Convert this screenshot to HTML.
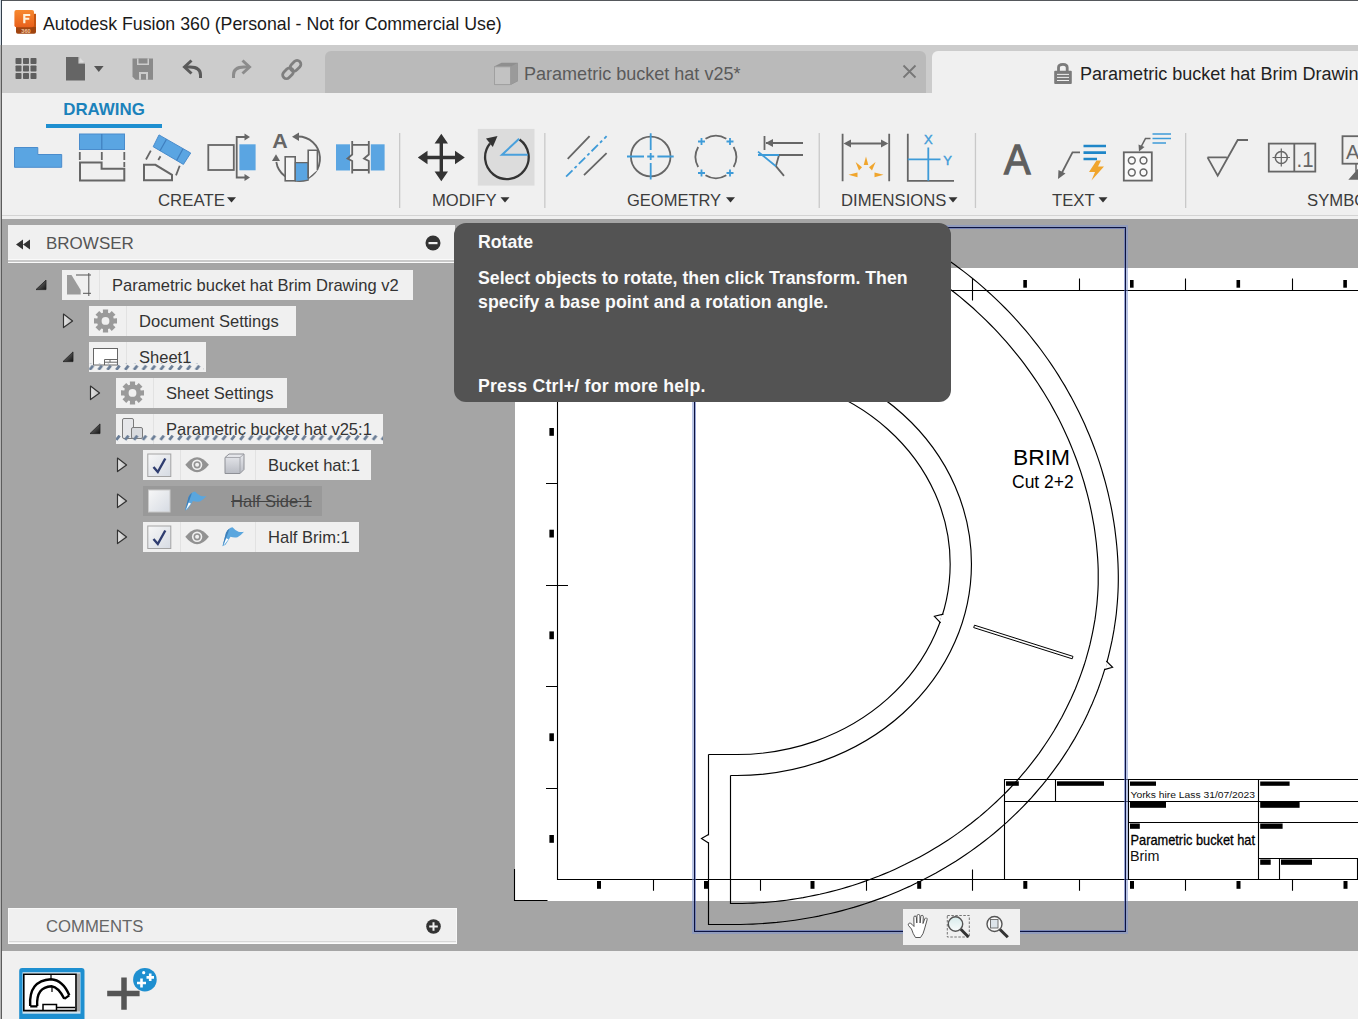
<!DOCTYPE html>
<html><head><meta charset="utf-8">
<style>
*{margin:0;padding:0;box-sizing:border-box}
html,body{width:1358px;height:1019px;overflow:hidden;background:#f0f0f0;font-family:"Liberation Sans",sans-serif}
.a{position:absolute}
.t{position:absolute;white-space:pre;line-height:1}
svg{position:absolute;overflow:visible}
.row{height:30px;background:#f0f0f0}
</style></head><body>
<!-- title bar -->
<div class="a" style="left:0;top:0;width:1358px;height:45px;background:#fff;border-top:1px solid #55585c"></div>
<div class="t" style="left:43px;top:16px;font-size:17.75px;color:#1a1a1a">Autodesk Fusion 360 (Personal - Not for Commercial Use)</div>

<!-- toolbar -->
<div class="a" style="left:0;top:45px;width:1358px;height:48px;background:#cccccc"></div>
<div class="a" style="left:325px;top:51px;width:601px;height:42px;background:#bababa;border-radius:6px 6px 0 0"></div>
<div class="t" style="left:524px;top:65px;font-size:18.05px;color:#5a5a5a">Parametric bucket hat v25*</div>
<div class="a" style="left:932px;top:51px;width:430px;height:42px;background:#f0f0f0;border-radius:6px 0 0 0"></div>
<div class="t" style="left:1080px;top:65px;font-size:18.05px;color:#222">Parametric bucket hat Brim Drawing v2</div>

<svg style="left:0;top:0" width="1" height="1">
 <defs>
  <linearGradient id="ftop" x1="0" y1="0" x2="0" y2="1"><stop offset="0" stop-color="#f7892f"/><stop offset="1" stop-color="#e8601c"/></linearGradient>
 </defs>
 <!-- app icon -->
 <path d="M16 26 H36 V32 Q36 33.8 34.2 33.8 H17.8 Q16 33.8 16 32 Z" fill="#a0440f"/>
 <path d="M33 13.8 H36 V27 H33 Z" fill="#c45412"/>
 <rect x="14.4" y="10.1" width="19.6" height="17.2" rx="2" fill="url(#ftop)"/>
 <path d="M23.2 23.2 V13.9 H30.2 V16 H25.4 V17.7 H29.3 V19.8 H25.4 V23.2 Z" fill="#fff3dc"/>
 <text x="26" y="32.6" font-size="5.6" font-weight="bold" fill="#f4c8a0" text-anchor="middle" font-family="Liberation Sans">360</text>
 <!-- grid -->
 <g fill="#5e5e5e">
  <rect x="15.5" y="58" width="6" height="6" rx="0.8"/><rect x="23" y="58" width="6" height="6" rx="0.8"/><rect x="30.5" y="58" width="6" height="6" rx="0.8"/>
  <rect x="15.5" y="65.5" width="6" height="6" rx="0.8"/><rect x="23" y="65.5" width="6" height="6" rx="0.8"/><rect x="30.5" y="65.5" width="6" height="6" rx="0.8"/>
  <rect x="15.5" y="73" width="6" height="6" rx="0.8"/><rect x="23" y="73" width="6" height="6" rx="0.8"/><rect x="30.5" y="73" width="6" height="6" rx="0.8"/>
 </g>
 <!-- file -->
 <path d="M66 57 H78.5 L85 63.5 V80.5 H66 Z" fill="#656565"/>
 <path d="M78.5 57 V63.5 H85" fill="#cccccc" stroke="#fff" stroke-width="0.1"/>
 <path d="M79.8 57.5 V62.2 H84.5 Z" fill="#dddddd"/>
 <path d="M94 66 H103.6 L98.8 72 Z" fill="#555"/>
 <!-- save -->
 <path d="M132.5 58.5 H153 V79.7 H135.5 L132.5 76.7 Z" fill="#8a8a8a"/>
 <rect x="137" y="58.5" width="12" height="6.5" fill="#cccccc"/>
 <rect x="138.5" y="58.5" width="9" height="5" fill="#8a8a8a"/>
 <rect x="139" y="72" width="9" height="7.7" fill="#cccccc"/>
 <rect x="141" y="74" width="5" height="5.7" fill="#8a8a8a"/>
 <!-- undo -->
 <path d="M200.5 78 V75 Q200.5 67 190 67 H186" fill="none" stroke="#5a5a5a" stroke-width="3"/>
 <path d="M191.5 60.5 L184.5 67 L191.5 73.5" fill="none" stroke="#5a5a5a" stroke-width="3"/>
 <!-- redo -->
 <path d="M233.5 78 V75 Q233.5 67 244 67 H248" fill="none" stroke="#8c8c8c" stroke-width="3"/>
 <path d="M242.5 60.5 L249.5 67 L242.5 73.5" fill="none" stroke="#8c8c8c" stroke-width="3"/>
 <!-- link -->
 <g fill="none" stroke="#7f7f7f" stroke-width="2.8">
  <rect x="291.7" y="59.8" width="7.6" height="12" rx="3.8" transform="rotate(45 295.5 65.8)"/>
  <rect x="284.2" y="67.3" width="7.6" height="12" rx="3.8" transform="rotate(45 288 73.3)"/>
 </g>
 <!-- inactive tab cube -->
 <path d="M494 66.5 L501.5 62.8 H517.8 V81.2 L510.5 85.1 H494 Z" fill="#8f8f8f"/>
 <path d="M494.5 66.8 H510.5 V84.6 H494.5 Z" fill="#c2c2c2" stroke="#a0a0a0" stroke-width="1"/>
 <path d="M510.5 66.8 L517.5 63 V81 L510.5 84.8 Z" fill="#9a9a9a"/>
 <!-- close X -->
 <path d="M903.5 65.5 L915.5 77.5 M915.5 65.5 L903.5 77.5" stroke="#777" stroke-width="1.8"/>
 <!-- lock -->
 <path d="M1058.5 71 V67.5 Q1058.5 64.3 1063 64.3 Q1067.2 64.3 1067.2 67.5 V71" fill="none" stroke="#7b7b7b" stroke-width="2.8"/>
 <rect x="1054.2" y="70.8" width="17.6" height="13.1" rx="1" fill="#7b7b7b"/>
 <path d="M1057 74.4 H1069 M1057 77.4 H1069 M1057 80.5 H1069" stroke="#f0f0f0" stroke-width="1"/>
</svg>
<!-- ribbon -->
<div class="a" style="left:0;top:93px;width:1358px;height:126px;background:#f0f0f0"></div>
<div class="a" style="left:0;top:215px;width:1358px;height:1px;background:#d4d4d4"></div>
<div class="t" style="left:63.2px;top:102px;font-size:16.9px;font-weight:bold;color:#1b82bb">DRAWING</div>
<div class="a" style="left:46px;top:124px;width:116px;height:4px;background:#1e8fd0"></div>
<div class="t" style="left:158px;top:193px;font-size:16.8px;color:#3c3c3c">CREATE</div>
<div class="t" style="left:432px;top:193px;font-size:16.6px;color:#3c3c3c">MODIFY</div>
<div class="t" style="left:627px;top:192.4px;font-size:16.5px;color:#3c3c3c">GEOMETRY</div>
<div class="t" style="left:841px;top:193px;font-size:16.65px;color:#3c3c3c">DIMENSIONS</div>
<div class="t" style="left:1052px;top:193px;font-size:16.7px;color:#3c3c3c">TEXT</div>
<div class="t" style="left:1307px;top:193px;font-size:16.7px;color:#3c3c3c">SYMBOLS</div>

<svg style="left:0;top:0" width="1" height="1">
 <defs>
  <marker id="ah" viewBox="0 0 10 10" refX="8" refY="5" markerWidth="4" markerHeight="4" orient="auto-start-reverse"><path d="M0 0 L10 5 L0 10 Z" fill="#666"/></marker>
 </defs>
 <!-- separators -->
 <g fill="#c9c9c9"><rect x="399" y="133" width="1.3" height="75"/><rect x="544.2" y="133" width="1.3" height="75"/><rect x="818.6" y="133" width="1.3" height="75"/><rect x="974.8" y="133" width="1.3" height="75"/><rect x="1185" y="133" width="1.3" height="75"/></g>
 <!-- dropdown triangles -->
 <g fill="#333"><path d="M227 197.3 H236 L231.5 202.6 Z"/><path d="M500.5 197.3 H509.5 L505 202.6 Z"/><path d="M726 197.3 H735 L730.5 202.6 Z"/><path d="M948.5 197.3 H957.5 L953 202.6 Z"/><path d="M1098.5 197.3 H1107.5 L1103 202.6 Z"/></g>
 <!-- 1 base view -->
 <path d="M14.5 147.5 H37.8 V154.5 H61.7 V167.3 H14.5 Z" fill="#5aa5e2" stroke="#4a8ccc" stroke-width="1"/>
 <!-- 2 projected views -->
 <rect x="79.5" y="134" width="45" height="15.5" fill="#5aa5e2" stroke="#4a8ccc" stroke-width="1"/>
 <path d="M101.8 134 V149.5" stroke="#3f7fbf" stroke-width="1.2"/>
 <path d="M79.8 152 V160 M101.8 152 V160 M124.3 152 V160 M124.3 162 V167" stroke="#666" stroke-width="1.8"/>
 <path d="M80 162.6 H101.6 V168.8 H124.3 V180.6 H80 Z" fill="none" stroke="#666" stroke-width="2"/>
 <!-- 3 auxiliary view -->
 <path d="M159 134.9 L190.7 153 L183.4 164.4 L153.2 146.7 Z" fill="#5aa5e2" stroke="#4a8ccc" stroke-width="1"/>
 <path d="M166.5 139.2 L160 150.8 M183 148.8 L176.7 160.4" stroke="#3f7fbf" stroke-width="1.2"/>
 <path d="M150.8 150.6 L146 159.5 M160.5 156.3 L158.3 160 M179.7 165.8 L176 175.4" stroke="#666" stroke-width="1.8"/>
 <path d="M144 164.8 H155.4 L172 174.8 V180.3 H144 Z" fill="none" stroke="#666" stroke-width="2"/>
 <!-- 4 projected -->
 <rect x="208.3" y="145" width="25.5" height="25" fill="none" stroke="#666" stroke-width="1.8"/>
 <rect x="239.4" y="144.3" width="16.2" height="26" fill="#5aa5e2"/>
 <path d="M246 137 H236.7 V177.5 H246" fill="none" stroke="#666" stroke-width="1.8"/>
 <path d="M244.5 133.5 L250 137 L244.5 140.5 Z M244.5 174 L250 177.5 L244.5 181 Z" fill="#666"/>
 <!-- 5 detail -->
 <text x="272.2" y="148.3" font-size="20" font-weight="bold" fill="#666" font-family="Liberation Sans" textLength="15.5" lengthAdjust="spacingAndGlyphs">A</text>
 <path d="M297.5 136.5 A22 22 0 1 1 276.3 162" fill="none" stroke="#666" stroke-width="1.8"/>
 <path d="M292 136.8 L299 132.5 L299 141 Z" fill="#666"/>
 <path d="M276 154.2 L272 161 L280 161 Z" fill="#666"/>
 <rect x="285.2" y="156.8" width="10" height="24" fill="#f6f6f6" stroke="#666" stroke-width="1.6"/>
 <path d="M295.3 162.6 H308.2 V180.2 Q301 182 295.3 181 Z" fill="#5aa5e2" stroke="#666" stroke-width="1.2"/>
 <path d="M308.2 178 V150.3 H317.4 V170" fill="#f6f6f6" stroke="#666" stroke-width="1.6"/>
 <!-- 6 break view -->
 <rect x="336" y="144.3" width="14" height="26.2" fill="#5aa5e2"/>
 <rect x="370.8" y="144.3" width="13.8" height="26.2" fill="#5aa5e2"/>
 <path d="M352 144.8 H369 M352 170 H369" stroke="#666" stroke-width="1.8"/>
 <path d="M352.2 141 V154.5 L347.5 158.5 L352.2 161 V173.5 M368.8 141 V154.5 L364 158.5 L368.8 161 V173.5" fill="none" stroke="#666" stroke-width="1.8"/>
 <!-- 7 move -->
 <path d="M441.3 140 V175 M423.5 157.5 H459" stroke="#333" stroke-width="3.4"/>
 <path d="M441.3 133.8 L448 143.5 H434.6 Z M441.3 181.3 L448 171.5 H434.6 Z M417.8 157.5 L427.5 150.8 V164.2 Z M464.8 157.5 L455 150.8 V164.2 Z" fill="#333"/>
 <!-- 8 rotate -->
 <rect x="477.8" y="128.9" width="56.7" height="56.7" fill="#dcdcdc"/>
 <path d="M519.5 139.5 A21.8 21.8 0 1 1 490 143.5" fill="none" stroke="#333" stroke-width="2.3"/>
 <path d="M497.5 136 L486 138.5 L492.8 147 Z" fill="#333"/>
 <path d="M527.8 154.8 H502 L519.1 138.8" fill="none" stroke="#49a0dc" stroke-width="2"/>
 <!-- 9 centerline -->
 <path d="M567.7 158.9 L589.6 136.2 M584 175.1 L606.6 153.2" stroke="#666" stroke-width="1.8"/>
 <path d="M566.1 176.7 L606.6 136.2" stroke="#3e9bd8" stroke-width="1.8" stroke-dasharray="9 3 3 3"/>
 <!-- 10 center mark -->
 <circle cx="650.7" cy="156.5" r="19.8" fill="none" stroke="#666" stroke-width="1.8"/>
 <path d="M627 156.5 H644 M647.2 156.5 H654.2 M657.4 156.5 H673.7 M650.7 133.3 V150 M650.7 153 V160 M650.7 163 V179.6" stroke="#3e9bd8" stroke-width="1.8"/>
 <!-- 11 circle with pluses -->
 <path d="M705.5 138.8 A20.3 20.3 0 0 1 726.3 138.8 M733.6 147 A20.3 20.3 0 0 1 733.6 167 M726.3 175.3 A20.3 20.3 0 0 1 705.5 175.3 M698.2 167 A20.3 20.3 0 0 1 698.2 147" fill="none" stroke="#666" stroke-width="1.8"/>
 <path d="M698 141.5 H705 M701.5 138 V145 M726.5 141.5 H733.5 M730 138 V145 M698 173 H705 M701.5 169.5 V176.5 M726.5 173 H733.5 M730 169.5 V176.5" stroke="#3e9bd8" stroke-width="1.8"/>
 <!-- 12 leader datum -->
 <path d="M764.5 136 V150 M766 143 H803 M779 155 H803 M779 155 L775.9 166.2 L784 175.9" fill="none" stroke="#666" stroke-width="1.8"/>
 <path d="M765.5 143 L773 139 V147 Z" fill="#666"/>
 <path d="M758 151.6 L775.9 166.2 M758 155 H779" stroke="#3e9bd8" stroke-width="1.8"/>
 <!-- 13 linear dim -->
 <path d="M842.6 133.8 V181.3 M889.2 133.8 V181.3 M847 143.5 H885" stroke="#666" stroke-width="1.8"/>
 <path d="M843.5 143.5 L851 139.5 V147.5 Z M888.3 143.5 L881 139.5 V147.5 Z" fill="#666"/>
 <g fill="#f0a52c">
  <path d="M866 156.5 L868.3 165 L863.7 165 Z"/>
  <path d="M875.6 162 L872 170.5 L869 167.3 Z"/>
  <path d="M855.6 162 L862 167.3 L859 170.5 Z"/>
  <path d="M848.5 174.8 L857.5 172.5 L857.5 177.2 Z"/>
  <path d="M883.5 174.8 L874.5 172.5 L874.5 177.2 Z"/>
 </g>
 <!-- 14 ordinate -->
 <path d="M907.8 133.8 V180.8 H954" fill="none" stroke="#666" stroke-width="1.8"/>
 <path d="M928.3 147.6 V180.8 M907.8 159.4 H940.5" stroke="#3e9bd8" stroke-width="1.8"/>
 <text x="928.3" y="143.5" font-size="13" fill="#3e9bd8" stroke="#3e9bd8" stroke-width="0.4" text-anchor="middle" font-family="Liberation Sans">X</text>
 <text x="947.5" y="164.8" font-size="13" fill="#3e9bd8" stroke="#3e9bd8" stroke-width="0.4" text-anchor="middle" font-family="Liberation Sans">Y</text>
 <!-- 15 A -->
 <text x="1004" y="174.3" font-size="43" fill="#5f5f5f" stroke="#5f5f5f" stroke-width="1.3" font-family="Liberation Sans" textLength="26.5" lengthAdjust="spacingAndGlyphs">A</text>
 <!-- 16 leader note -->
 <path d="M1080 152.4 H1072.5 L1060.5 175.5" fill="none" stroke="#666" stroke-width="1.8"/>
 <path d="M1058 179 L1058.5 170 L1065.5 173.5 Z" fill="#666"/>
 <path d="M1083.5 146 H1106 M1083.5 152.6 H1106 M1083.5 159 H1097" stroke="#1f86c8" stroke-width="2.6"/>
 <path d="M1096.5 160.5 L1089 172 H1095 L1091.5 180.5 L1104 166.5 H1098 L1101 160.5 Z" fill="#f0a52c"/>
 <!-- 17 balloon -->
 <rect x="1123.8" y="152.3" width="28" height="28.3" fill="#fafafa" stroke="#666" stroke-width="1.8"/>
 <g fill="none" stroke="#666" stroke-width="1.5"><circle cx="1131.8" cy="160.5" r="3.4"/><circle cx="1143.5" cy="160.5" r="3.4"/><circle cx="1131.8" cy="172.5" r="3.4"/><circle cx="1143.5" cy="172.5" r="3.4"/></g>
 <path d="M1150.5 138.5 H1145.5 L1141 147" fill="none" stroke="#666" stroke-width="1.6"/>
 <path d="M1139 151.5 L1138.5 144.5 L1144.5 147 Z" fill="#666"/>
 <path d="M1152.5 134 H1171 M1152.5 138.6 H1171 M1152.5 143 H1166" stroke="#3e9bd8" stroke-width="1.5"/>
 <!-- 18 surface texture -->
 <path d="M1207.5 157.4 H1226.8 M1207.5 157.4 L1217.7 175.7 L1237.7 140 H1248" fill="none" stroke="#666" stroke-width="1.8" stroke-linejoin="miter"/>
 <!-- 19 FCF -->
 <rect x="1268.8" y="143.6" width="46.5" height="28" fill="none" stroke="#666" stroke-width="1.8"/>
 <path d="M1294.3 143.6 V171.6" stroke="#666" stroke-width="1.8"/>
 <circle cx="1281.3" cy="157.5" r="6" fill="none" stroke="#666" stroke-width="1.5"/>
 <path d="M1272.5 157.5 H1290 M1281.3 148.5 V166.5" stroke="#666" stroke-width="1.2"/>
 <text x="1296.5" y="166.8" font-size="22" fill="#666" font-family="Liberation Sans" textLength="17" lengthAdjust="spacingAndGlyphs">.1</text>
 <!-- 20 datum -->
 <rect x="1342.5" y="136.2" width="25" height="27.5" fill="none" stroke="#666" stroke-width="1.8"/>
 <text x="1346" y="159" font-size="20" fill="#666" font-family="Liberation Sans">A</text>
 <path d="M1356 164 V175 M1350 179 L1358 170 L1366 179 Z" stroke="#666" stroke-width="1.5" fill="#666"/>
</svg>
<!-- canvas -->
<div class="a" style="left:0;top:219px;width:1358px;height:732px;background:#a5a5a5"></div>
<div class="a" style="left:515px;top:268px;width:843px;height:633px;background:#fff"></div>
<svg style="left:0;top:0" width="1" height="1">
 <g stroke="#000" stroke-width="1.1" fill="none">
  <!-- border -->
  <path d="M557.5 290 V880 M557 290.5 H1358 M557 879.5 H1358"/>
  <!-- left ticks -->
  <path d="M546 381.5 H557 M546 483.5 H557 M546 585.5 H568 M546 686.5 H557 M546 788.5 H557"/>
  <!-- top ticks -->
  <path d="M653.5 278.5 V290 M760.5 278.5 V290 M866.5 278.5 V290 M972.5 278.5 V300.5 M1079.5 278.5 V290 M1185.5 278.5 V290 M1292.5 278.5 V290"/>
  <!-- bottom ticks -->
  <path d="M653.5 880 V890.7 M760.5 880 V890.7 M866.5 880 V890.7 M972.5 869.5 V890.7 M1079.5 880 V890.7 M1185.5 880 V890.7 M1292.5 880 V890.7"/>
  <!-- crop mark -->
  <path d="M514.5 869 V900.5 H547.5"/>
 </g>
 <g fill="#000">
  <rect x="549.4" y="428" width="4.5" height="7.8"/><rect x="549.4" y="529.7" width="4.5" height="7.8"/><rect x="549.4" y="631.4" width="4.5" height="7.8"/><rect x="549.4" y="733.3" width="4.5" height="7.8"/><rect x="549.4" y="835" width="4.5" height="7.8"/>
  <rect x="597" y="881" width="4" height="7.8"/><rect x="704" y="881" width="4" height="7.8"/><rect x="810.5" y="881" width="4" height="7.8"/><rect x="917.2" y="881" width="4" height="7.8"/><rect x="1023.3" y="881" width="4" height="7.8"/><rect x="1130" y="881" width="4" height="7.8"/><rect x="1236.5" y="881" width="4" height="7.8"/><rect x="1343.5" y="881" width="4" height="7.8"/>
  <rect x="1023.3" y="280" width="3.6" height="7.7"/><rect x="1130" y="280" width="3.6" height="7.7"/><rect x="1236.5" y="280" width="3.6" height="7.7"/><rect x="1343.3" y="280" width="3.6" height="7.7"/>
 </g>
 <!-- brim shape -->
 <clipPath id="cv"><rect x="0" y="224" width="1358" height="727"/></clipPath>
 <g stroke="#000" stroke-width="1.15" fill="none" clip-path="url(#cv)">
  <path d="M737 373.4 A213 190.4 0 0 1 737 754.5 H708.5"/>
  <path d="M737 352.3 A234 211.2 0 0 1 737 775.5 H730.5"/>
  <path d="M862.3 215.3 L868.0 217.5 L873.6 219.7 L879.3 222.1 L884.8 224.5 L890.4 227.0 L895.9 229.6 L901.4 232.3 L906.8 235.1 L912.2 238.0 L917.5 241.0 L922.8 244.0 L928.1 247.2 L933.3 250.4 L938.5 253.7 L943.6 257.0 L948.7 260.5 L953.7 264.0 L958.7 267.7 L963.6 271.4 L968.4 275.1 L973.2 279.0 L978.0 282.9 L982.6 286.9 L987.2 291.0 L991.8 295.1 L996.3 299.3 L1000.7 303.6 L1005.1 308.0 L1009.4 312.4 L1013.6 316.9 L1017.7 321.4 L1021.8 326.1 L1025.8 330.7 L1029.8 335.5 L1033.6 340.3 L1037.4 345.1 L1041.1 350.0 L1044.7 355.0 L1048.3 360.0 L1051.8 365.1 L1055.2 370.2 L1058.5 375.4 L1061.7 380.7 L1064.9 385.9 L1067.9 391.3 L1070.9 396.6 L1073.8 402.0 L1076.6 407.5 L1079.4 413.0 L1082.0 418.5 L1084.6 424.1 L1087.0 429.7 L1089.4 435.3 L1091.7 441.0 L1093.9 446.7 L1096.0 452.4 L1098.0 458.1 L1099.9 463.9 L1101.7 469.7 L1103.4 475.5 L1105.1 481.4 L1106.6 487.2 L1108.1 493.1 L1109.4 499.0 L1110.7 504.9 L1111.9 510.8 L1112.9 516.7 L1113.9 522.6 L1114.8 528.6 L1115.5 534.5 L1116.2 540.4 L1116.8 546.3 L1117.3 552.2 L1117.7 558.1 L1118.0 563.9 L1118.2 569.7 L1118.3 575.4 L1118.3 580.9 L1118.2 586.4 L1118.0 591.8 L1117.7 597.3 L1117.3 602.8 L1116.8 608.2 L1116.3 613.7 L1115.6 619.1 L1114.8 624.5 L1114.0 629.9 L1113.0 635.3 L1112.0 640.7 L1110.8 646.1 L1109.6 651.4 L1108.3 656.8 L1106.9 662.1 L1105.3 667.4 L1103.7 672.6 L1102.0 677.9 L1100.2 683.1 L1098.4 688.3 L1096.4 693.5 L1094.3 698.6 L1092.2 703.7 L1089.9 708.8 L1087.6 713.9 L1085.2 718.9 L1082.7 723.9 L1080.1 728.8 L1077.4 733.7 L1074.7 738.6 L1071.8 743.4 L1068.9 748.2 L1065.9 752.9 L1062.8 757.6 L1059.6 762.3 L1056.3 766.9 L1053.0 771.4 L1049.6 775.9 L1046.1 780.4 L1042.5 784.8 L1038.8 789.2 L1035.1 793.5 L1031.3 797.8 L1027.4 802.0 L1023.5 806.1 L1019.5 810.2 L1015.4 814.2 L1011.2 818.2 L1007.0 822.1 L1002.7 825.9 L998.3 829.7 L993.9 833.5 L989.4 837.1 L984.8 840.7 L980.2 844.3 L975.5 847.7 L970.8 851.1 L965.9 854.5 L961.1 857.7 L956.2 860.9 L951.2 864.0 L946.2 867.1 L941.1 870.1 L936.0 873.0 L930.8 875.8 L925.5 878.6 L920.3 881.2 L914.9 883.8 L909.6 886.4 L904.2 888.8 L898.7 891.2 L893.2 893.5 L887.7 895.7 L882.1 897.9 L876.5 899.9 L870.8 901.9 L865.2 903.8 L859.5 905.6 L853.7 907.4 L847.9 909.0 L842.1 910.6 L836.3 912.1 L830.5 913.5 L824.6 914.8 L818.7 916.1 L812.8 917.2 L806.8 918.3 L800.9 919.3 L794.9 920.2 L788.9 921.0 L782.9 921.7 L776.9 922.4 L770.8 922.9 L764.8 923.4 L758.8 923.8 L752.7 924.1 L746.7 924.3 L740.6 924.5 L734.5 924.5 H708.5 V754.5"/>
  <path d="M762.8 215.1 L768.2 215.6 L773.6 216.2 L779.1 216.9 L784.5 217.7 L790.0 218.6 L795.4 219.5 L800.9 220.6 L806.4 221.8 L811.8 223.0 L817.3 224.4 L822.7 225.8 L828.2 227.4 L833.6 229.0 L839.0 230.7 L844.4 232.5 L849.8 234.4 L855.1 236.3 L860.5 238.4 L865.8 240.5 L871.1 242.8 L876.3 245.1 L881.6 247.5 L886.8 250.0 L891.9 252.6 L897.1 255.2 L902.2 258.0 L907.2 260.8 L912.2 263.7 L917.2 266.7 L922.1 269.7 L927.0 272.9 L931.9 276.1 L936.7 279.4 L941.5 282.7 L946.2 286.2 L950.8 289.7 L955.4 293.3 L960.0 296.9 L964.5 300.7 L968.9 304.5 L973.3 308.3 L977.6 312.3 L981.9 316.3 L986.1 320.4 L990.2 324.5 L994.3 328.7 L998.3 332.9 L1002.3 337.3 L1006.2 341.6 L1010.0 346.1 L1013.7 350.6 L1017.4 355.1 L1021.0 359.7 L1024.6 364.4 L1028.0 369.1 L1031.4 373.8 L1034.7 378.6 L1038.0 383.5 L1041.1 388.4 L1044.2 393.3 L1047.2 398.3 L1050.2 403.3 L1053.0 408.4 L1055.8 413.5 L1058.5 418.6 L1061.1 423.8 L1063.6 429.0 L1066.0 434.2 L1068.4 439.5 L1070.6 444.8 L1072.8 450.1 L1074.9 455.5 L1076.9 460.8 L1078.8 466.2 L1080.7 471.6 L1082.4 477.1 L1084.1 482.5 L1085.6 488.0 L1087.1 493.4 L1088.5 498.9 L1089.8 504.4 L1091.0 509.9 L1092.1 515.4 L1093.1 520.9 L1094.1 526.4 L1094.9 531.8 L1095.6 537.3 L1096.3 542.7 L1096.8 548.2 L1097.3 553.6 L1097.7 558.9 L1098.0 564.2 L1098.2 569.5 L1098.2 574.6 L1098.2 579.4 L1098.2 584.3 L1098.0 589.3 L1097.7 594.2 L1097.3 599.3 L1096.9 604.3 L1096.3 609.3 L1095.7 614.3 L1095.0 619.4 L1094.1 624.4 L1093.2 629.4 L1092.2 634.4 L1091.1 639.4 L1090.0 644.4 L1088.7 649.4 L1087.3 654.4 L1085.9 659.4 L1084.4 664.3 L1082.7 669.2 L1081.0 674.1 L1079.2 679.0 L1077.3 683.9 L1075.4 688.7 L1073.3 693.5 L1071.2 698.3 L1068.9 703.1 L1066.6 707.8 L1064.2 712.5 L1061.8 717.2 L1059.2 721.8 L1056.6 726.4 L1053.9 731.0 L1051.1 735.5 L1048.2 740.0 L1045.2 744.5 L1042.2 748.9 L1039.1 753.3 L1035.9 757.6 L1032.6 761.9 L1029.3 766.1 L1025.9 770.3 L1022.4 774.4 L1018.9 778.5 L1015.2 782.6 L1011.5 786.6 L1007.8 790.5 L1004.0 794.4 L1000.1 798.2 L996.1 802.0 L992.1 805.7 L988.0 809.4 L983.8 813.0 L979.6 816.6 L975.3 820.0 L971.0 823.5 L966.6 826.8 L962.2 830.1 L957.7 833.4 L953.1 836.6 L948.5 839.7 L943.8 842.7 L939.1 845.7 L934.4 848.6 L929.5 851.5 L924.7 854.2 L919.8 856.9 L914.8 859.6 L909.8 862.1 L904.8 864.6 L899.7 867.0 L894.6 869.4 L889.5 871.7 L884.3 873.9 L879.1 876.0 L873.8 878.0 L868.5 880.0 L863.2 881.9 L857.9 883.7 L852.5 885.5 L847.1 887.1 L841.7 888.7 L836.2 890.2 L830.8 891.6 L825.3 893.0 L819.8 894.3 L814.3 895.4 L808.7 896.5 L803.2 897.6 L797.6 898.5 L792.1 899.4 L786.5 900.2 L781.0 900.9 L775.4 901.5 L769.8 902.0 L764.3 902.5 L758.7 902.8 L753.2 903.1 L747.7 903.3 L742.2 903.5 L736.8 903.5 H730.5 V775.5"/>
  <!-- notches -->
  <path d="M708.5 835.2 V842.3 M943 614.9 L940.8 622 M1105.9 662 L1104.8 668.8" stroke="#fff" stroke-width="2.6"/>
  <path d="M708.5 834.5 L701.5 838.5 L708.5 843"/>
  <path d="M943.4 614.1 L934.4 616.3 L940.6 622.8"/>
  <path d="M1106.4 661.1 L1112.6 667.3 L1104.3 669.6"/>
  <!-- grainline -->
  <path d="M974.5 625.2 L1073 656.4 L1072.2 658.8 L973.7 627.6 Z" stroke-width="1"/>
 </g>
 <!-- title block -->
 <g stroke="#000" stroke-width="1.1" fill="none">
  <path d="M1004.5 879.5 V779.5 H1358 M1004.5 801.5 H1128.5 M1055.5 779.5 V801.5 M1128.5 779.5 V879.5 M1128.5 801.5 H1358 M1128.5 822.5 H1358 M1258.5 779.5 V879.5 M1258.5 858.5 H1358 M1279.5 858.5 V879.5 M1357.5 858.5 V879.5"/>
 </g>
 <g fill="#000">
  <rect x="1006" y="781.3" width="12.8" height="4.5"/><rect x="1057" y="781.3" width="47" height="4.5"/>
  <rect x="1130" y="781.5" width="26" height="4.3"/><rect x="1260.2" y="781.5" width="29.4" height="4.3"/>
  <rect x="1130" y="802" width="36" height="5.8"/><rect x="1260.2" y="802" width="39.4" height="5.8"/>
  <rect x="1130" y="823.5" width="9.8" height="5.3"/><rect x="1260.2" y="823.5" width="22.4" height="5.3"/>
  <rect x="1260.2" y="859.5" width="10.5" height="5.3"/><rect x="1281" y="859.5" width="31" height="5.3"/>
 </g>
 <text x="1130.5" y="797.8" font-size="9.6" fill="#111" font-family="Liberation Sans" textLength="124.5" lengthAdjust="spacingAndGlyphs">Yorks hire Lass  31/07/2023</text>
 <text x="1130.5" y="845.4" font-size="14.2" fill="#000" stroke="#000" stroke-width="0.3" font-family="Liberation Sans" textLength="124.5" lengthAdjust="spacingAndGlyphs">Parametric bucket hat</text>
 <text x="1130" y="860.5" font-size="14.4" fill="#111" font-family="Liberation Sans" textLength="29.5" lengthAdjust="spacingAndGlyphs">Brim</text>
 <!-- text -->
 <text x="1013" y="464.8" font-size="22.8" fill="#000" font-family="Liberation Sans">BRIM</text>
 <text x="1012" y="488.3" font-size="17.5" fill="#000" font-family="Liberation Sans">Cut 2+2</text>
</svg>

<!-- selection rect -->
<div class="a" style="left:692px;top:225px;width:436px;height:709px;border:2px solid rgba(130,150,210,0.55)"></div>
<div class="a" style="left:694px;top:227px;width:432px;height:705px;border:1px solid #0c1340;"></div>
<div class="a" style="left:695px;top:228px;width:430px;height:703px;border:1px solid rgba(90,110,190,0.6)"></div>
<!-- nav bar -->
<div class="a" style="left:903px;top:909px;width:117px;height:36px;background:#f0f0f0"></div>
<svg style="left:0;top:0" width="1" height="1">
 <defs><linearGradient id="lens" x1="0" y1="0" x2="0" y2="1"><stop offset="0" stop-color="#d8ecec"/><stop offset="1" stop-color="#f8fbfb"/></linearGradient></defs>
 <!-- hand -->
 <path d="M911.5 929 L908.5 925.5 Q907.5 924 909.2 923.2 Q910.5 922.8 912 924.3 L914 926.5 L913.8 917.5 Q913.8 916 915 916 Q916.3 916 916.4 917.5 L916.8 923 L917 915.8 Q917.2 914.5 918.5 914.5 Q919.8 914.5 919.9 915.8 L920.1 923 L920.8 916.5 Q921 915.2 922.2 915.3 Q923.4 915.5 923.3 916.8 L923 923.5 L924.8 918.8 Q925.4 917.6 926.5 918 Q927.5 918.5 927.1 919.8 L924.5 929 Q923.5 934 920.5 937.5 H915.5 Q913 934 911.5 929 Z" fill="#fff" stroke="#444" stroke-width="0.9"/>
 <!-- zoom window -->
 <rect x="947.3" y="915.5" width="22" height="21.5" fill="none" stroke="#666" stroke-width="0.9" stroke-dasharray="2.5 1.5"/>
 <circle cx="955.5" cy="924" r="7.2" fill="url(#lens)" stroke="#555" stroke-width="1.4"/>
 <path d="M960.8 929.3 L968.5 937" stroke="#333" stroke-width="3"/>
 <!-- zoom fit -->
 <circle cx="994.5" cy="924" r="7.5" fill="#fafafa" stroke="#555" stroke-width="1.4"/>
 <rect x="990.5" y="919.5" width="7.5" height="8.5" fill="#dde4ea" stroke="#666" stroke-width="0.9"/>
 <path d="M1000 929.5 L1007.8 937.3" stroke="#333" stroke-width="3"/>
</svg>
<!-- browser -->
<div class="a" style="left:8px;top:225px;width:447px;height:38px;background:#f0f0f0"></div>
<div class="t" style="left:46px;top:235px;font-size:17px;color:#555">BROWSER</div>
<div class="a" style="left:8px;top:259px;width:447px;height:1px;background:#fafafa"></div>
<div class="a" style="left:8px;top:260px;width:447px;height:2px;background:#c8c8c8"></div>
<div class="a" style="left:8px;top:262px;width:447px;height:1px;background:#fafafa"></div>
<svg style="left:0;top:0" width="1" height="1">
 <path d="M16 244.5 L23 239.5 L23 249.5 Z M23 244.5 L30 239.5 L30 249.5 Z" fill="#333"/>
 <circle cx="433" cy="243" r="7.5" fill="#333"/>
 <rect x="428.5" y="242" width="9" height="2.2" fill="#f0f0f0"/>
</svg>
<!-- tree rows -->
<div class="a row" style="left:62px;top:270px;width:351px"></div>
<div class="a row" style="left:89px;top:306px;width:207px"></div>
<div class="a row" style="left:89px;top:342px;width:117px"></div>
<div class="a row" style="left:116px;top:378px;width:171px"></div>
<div class="a row" style="left:116px;top:414px;width:267px"></div>
<div class="a row" style="left:143px;top:450px;width:228px"></div>
<div class="a row" style="left:143px;top:486px;width:179px;background:#999"></div>
<div class="a row" style="left:143px;top:522px;width:216px"></div>
<svg style="left:0;top:0" width="1" height="1">
 <defs>
  <linearGradient id="tri" x1="0" y1="0" x2="1" y2="1"><stop offset="0" stop-color="#888"/><stop offset="1" stop-color="#111"/></linearGradient>
  <linearGradient id="otri" x1="0" y1="0" x2="1" y2="0"><stop offset="0" stop-color="#e6e6e6"/><stop offset="1" stop-color="#bdbdbd"/></linearGradient>
  <linearGradient id="cb" x1="0" y1="0" x2="1" y2="1"><stop offset="0" stop-color="#f7f7f7"/><stop offset="1" stop-color="#d6dbe3"/></linearGradient>
  <linearGradient id="cube" x1="0" y1="0" x2="0" y2="1"><stop offset="0" stop-color="#e9eaee"/><stop offset="1" stop-color="#b9bcc4"/></linearGradient>
  <pattern id="dots" x="0" y="0" width="8.85" height="7" patternUnits="userSpaceOnUse"><path d="M1.2 5.8 L4.6 1.6" stroke="#6a7d96" stroke-width="2.8"/></pattern>
  <g id="gear"><path d="M7.95 -3.29 L8.22 -2.51 L11.50 -2.65 L11.50 2.65 L8.22 2.51 L7.95 3.29 L7.59 4.04 L10.01 6.25 L6.25 10.01 L4.04 7.59 L3.29 7.95 L2.51 8.22 L2.65 11.50 L-2.65 11.50 L-2.51 8.22 L-3.29 7.95 L-4.04 7.59 L-6.25 10.01 L-10.01 6.25 L-7.59 4.04 L-7.95 3.29 L-8.22 2.51 L-11.50 2.65 L-11.50 -2.65 L-8.22 -2.51 L-7.95 -3.29 L-7.59 -4.04 L-10.01 -6.25 L-6.25 -10.01 L-4.04 -7.59 L-3.29 -7.95 L-2.51 -8.22 L-2.65 -11.50 L2.65 -11.50 L2.51 -8.22 L3.29 -7.95 L4.04 -7.59 L6.25 -10.01 L10.01 -6.25 L7.59 -4.04 Z M-3.9 0 A3.9 3.9 0 1 0 3.9 0 A3.9 3.9 0 1 0 -3.9 0 Z" fill="#9a9a9a" fill-rule="evenodd"/></g>
  <g id="eye"><path d="M-11.8 0 Q0 -15 11.8 0 Q0 15 -11.8 0 Z" fill="#929292"/><circle r="5.2" fill="#f0f0f0"/><circle r="3.6" fill="#929292"/><circle r="2" fill="#f0f0f0"/></g>
  <g id="chk"><rect x="0.5" y="0.5" width="23" height="22.5" fill="url(#cb)" stroke="#a3a3a3"/><path d="M6.2 13.5 L10.5 18.5 L18 5" fill="none" stroke="#2f3d70" stroke-width="2.4"/></g>
  <g id="flag"><path d="M0 19.5 L3.5 6 Q6 1 10 0.5 Q13 4 16 5 Q19 5.5 21.5 5 Q18 9 15 10.5 Q11 11 8 10 L3 18 Z" fill="#5aa6de"/><path d="M1 19 L3.6 11.5 L6 12.5 Z" fill="#fff"/><path d="M0 19.5 L3.5 6 Q5 3 7 1.8 L4.5 9 Z" fill="#3f7fb8"/></g>
 </defs>
 <!-- expanders -->
 <path d="M36 289.6 L46 280.1 L46 289.6 Z" fill="url(#tri)" stroke="#222" stroke-width="0.8"/>
 <path d="M63 361.6 L73 351.9 L73 361.6 Z" fill="url(#tri)" stroke="#222" stroke-width="0.8"/>
 <path d="M90 433.6 L100 423.9 L100 433.6 Z" fill="url(#tri)" stroke="#222" stroke-width="0.8"/>
 <path d="M63.5 314.1 L72.6 320.9 L63.5 327.6 Z" fill="url(#otri)" stroke="#333" stroke-width="1.2" stroke-linejoin="round"/>
 <path d="M90.5 386.1 L99.6 392.9 L90.5 399.6 Z" fill="url(#otri)" stroke="#333" stroke-width="1.2" stroke-linejoin="round"/>
 <path d="M117.5 458.1 L126.6 464.9 L117.5 471.6 Z" fill="url(#otri)" stroke="#333" stroke-width="1.2" stroke-linejoin="round"/>
 <path d="M117.5 494.1 L126.6 500.9 L117.5 507.6 Z" fill="url(#otri)" stroke="#333" stroke-width="1.2" stroke-linejoin="round"/>
 <path d="M117.5 530.1 L126.6 536.9 L117.5 543.6 Z" fill="url(#otri)" stroke="#333" stroke-width="1.2" stroke-linejoin="round"/>
 <!-- dividers -->
 <g fill="#e2e2e2">
  <rect x="99" y="270" width="1" height="30"/>
  <rect x="126" y="306" width="1" height="30"/>
  <rect x="126" y="342" width="1" height="30"/>
  <rect x="153" y="378" width="1" height="30"/>
  <rect x="153" y="414" width="1" height="30"/>
  <rect x="180" y="450" width="1" height="30"/><rect x="255" y="450" width="1" height="30"/>
  <rect x="180" y="522" width="1" height="30"/><rect x="255" y="522" width="1" height="30"/>
 </g>
 <!-- row1 drawing icon -->
 <path d="M67 275 L71.5 275 L80.7 290 L80.7 294.5 L67 294.5 Z" fill="#9b9b9b"/>
 <path d="M88.8 273 V296 M76 275 H91 M83 293.3 H91" stroke="#555" stroke-width="1"/>
 <!-- gears -->
 <use href="#gear" x="105.5" y="320.9"/>
 <use href="#gear" x="132.5" y="392.9"/>
 <!-- sheet icon -->
 <rect x="93.5" y="348.5" width="24" height="16.5" fill="#fff" stroke="#666" stroke-width="1"/>
 <path d="M104.5 365 V359.5 H117.5 M104.5 362.2 H117.5 M110 359.5 V362.2" fill="none" stroke="#666" stroke-width="1"/>
 <rect x="89" y="363" width="115" height="7" fill="url(#dots)"/>
 <!-- component icon -->
 <rect x="122.5" y="418.5" width="11" height="20" rx="1.5" fill="#e6e7ea" stroke="#7b7b7b"/>
 <rect x="131.5" y="427.5" width="11" height="11" rx="1.5" fill="#d9dbdf" stroke="#7b7b7b"/>
 <rect x="116" y="435" width="267" height="7" fill="url(#dots)"/>
 <!-- checkbox rows -->
 <use href="#chk" x="147.3" y="453.5"/>
 <use href="#eye" x="197.1" y="464.8"/>
 <path d="M225 457.5 L229 454 L244 454 L244 469.5 L240 473.5 L225 473.5 Z" fill="url(#cube)" stroke="#8e9096" stroke-width="1"/>
 <path d="M225 457.5 H240 V473.5 M240 457.5 L244 454" fill="none" stroke="#9a9ca2" stroke-width="0.8"/>
 <rect x="148.5" y="490" width="21.5" height="22" fill="url(#cb)" stroke="#c9c9c9"/>
 <use href="#flag" x="185" y="491"/>
 <use href="#chk" x="147.3" y="525.5"/>
 <use href="#eye" x="197.1" y="536.8"/>
 <use href="#flag" x="222.5" y="526.8"/>
</svg>
<div class="t" style="left:112px;top:278px;font-size:16.55px;color:#333">Parametric bucket hat Brim Drawing v2</div>
<div class="t" style="left:139px;top:314px;font-size:16.55px;color:#333">Document Settings</div>
<div class="t" style="left:139px;top:350px;font-size:16.55px;color:#333">Sheet1</div>
<div class="t" style="left:166px;top:386px;font-size:16.55px;color:#333">Sheet Settings</div>
<div class="t" style="left:166px;top:422px;font-size:16.55px;color:#333">Parametric bucket hat v25:1</div>
<div class="t" style="left:268px;top:458px;font-size:16.55px;color:#333">Bucket hat:1</div>
<div class="t" style="left:231px;top:494px;font-size:16.55px;color:#444;text-decoration:line-through">Half Side:1</div>
<div class="t" style="left:268px;top:530px;font-size:16.55px;color:#333">Half Brim:1</div>

<!-- comments -->
<div class="a" style="left:8px;top:908px;width:449px;height:36px;background:#f0f0f0;border:1px solid #f8f8f8;border-bottom:1px solid #fbfbfb"></div>
<div class="a" style="left:9px;top:941px;width:447px;height:1px;background:#d6d6d6"></div>
<div class="t" style="left:46px;top:919px;font-size:16.7px;color:#666">COMMENTS</div>
<svg style="left:0;top:0" width="1" height="1">
 <circle cx="433.5" cy="926.5" r="7.3" fill="#333"/>
 <path d="M429.2 926.5 H437.8 M433.5 922.2 V930.8" stroke="#f0f0f0" stroke-width="2"/>
</svg>

<!-- tooltip -->
<div class="a" style="left:454px;top:223px;width:497px;height:179px;background:#535353;border-radius:12px"></div>
<div class="t" style="left:478px;top:234px;font-size:17.7px;font-weight:bold;color:#fafafa">Rotate</div>
<div class="t" style="left:478px;top:270px;font-size:17.7px;font-weight:bold;color:#fafafa">Select objects to rotate, then click Transform. Then</div>
<div class="t" style="left:478px;top:294px;font-size:17.7px;letter-spacing:0.08px;font-weight:bold;color:#fafafa">specify a base point and a rotation angle.</div>
<div class="t" style="left:478px;top:378px;font-size:17.7px;letter-spacing:0.22px;font-weight:bold;color:#fafafa">Press Ctrl+/ for more help.</div>

<!-- bottom bar -->
<svg style="left:0;top:0" width="1" height="1">
 <rect x="19.2" y="968" width="65.3" height="60" rx="3" fill="#1e8fd0"/>
 <rect x="22.5" y="972.2" width="58" height="41.5" fill="#cfe3ef"/>
 <rect x="23" y="973.5" width="57" height="38" fill="#fff"/>
 <rect x="76.5" y="973.5" width="3.5" height="38" fill="#a9a9a9"/>
 <path d="M23.8 974.3 H76 V1010.6 H23.8 Z" fill="none" stroke="#000" stroke-width="1.6"/>
 <path d="M30.2 1006 Q28.5 980.5 51 979.2 Q63 980 69.3 995.3" fill="none" stroke="#000" stroke-width="2.4"/>
 <path d="M37.2 1006 Q36 987 51.5 986.2 Q58.5 987 64.3 998.8" fill="none" stroke="#000" stroke-width="2.4"/>
 <path d="M30.2 1006.3 H37.4 M69.3 995.3 L64.3 998.8" fill="none" stroke="#000" stroke-width="2.2"/>
 <path d="M51 975 V978.5 M52 986 V992" fill="none" stroke="#000" stroke-width="1.2"/>
 <path d="M43 1010 V1004.5 H56.5 V1010 M56.5 1007.5 H75" fill="none" stroke="#000" stroke-width="1.5"/>
 <path d="M107.2 993.5 H139.6 M124 977.4 V1009.8" stroke="#555" stroke-width="5.5"/>
 <circle cx="144.9" cy="979.7" r="11.8" fill="#1e8fd0"/>
 <path d="M137 983 H146 M141.5 978.5 V987.5 M146.5 977.4 H154 M150.2 973.5 V981" stroke="#fff" stroke-width="2.6"/>
 <circle cx="143.7" cy="972.7" r="1.6" fill="#fff"/>
</svg>
<!-- left window border -->
<div class="a" style="left:0;top:0;width:1px;height:1019px;background:#b4b4b4"></div>
<div class="a" style="left:1px;top:0;width:1px;height:1019px;background:#5c5c5c"></div>
<div class="a" style="left:0;top:0;width:1px;height:45px;background:#d4dde6"></div>
<div class="a" style="left:1px;top:0;width:1px;height:45px;background:#34404c"></div>
</body></html>
